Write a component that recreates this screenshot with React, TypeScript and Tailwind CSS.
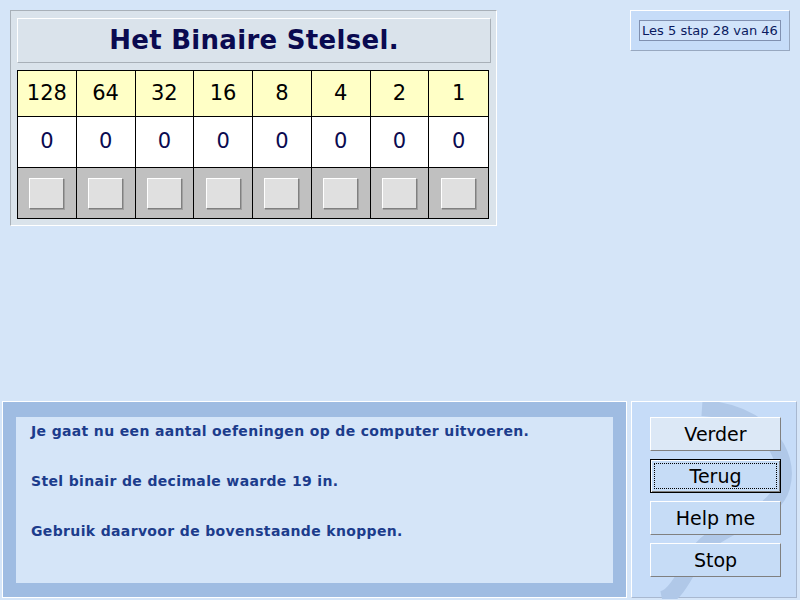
import React from "react";

const F = { fontFamily: '"DejaVu Sans", "Liberation Sans", sans-serif' };

const weights = [128, 64, 32, 16, 8, 4, 2, 1];

function SmallBtn() {
  return (
    <div className="w-[35px] h-[31px] bg-[#e0e0e0] border border-t-white border-l-white border-r-[#808080] border-b-[#808080] shadow-[1px_1px_0_#a0a0a0]" />
  );
}

function NavBtn({ label, focused, light }: { label: string; focused?: boolean; light?: boolean }) {
  return (
    <div
      className={`h-[34px] w-[131px] flex items-center justify-center text-[19px] text-black ${
        light ? "bg-[#dce8f6]" : "bg-[#c6dcf6]"
      } ${
        focused
          ? "border border-black shadow-[inset_1px_1px_0_#fff,inset_-1px_-1px_0_#808080]"
          : "border border-t-white border-l-white border-r-[#808080] border-b-[#808080]"
      }`}
      style={F}
    >
      {focused ? (
        <div className="w-[123px] h-[26px] border border-dotted border-black flex items-center justify-center">
          {label}
        </div>
      ) : (
        label
      )}
    </div>
  );
}

export default function App() {
  return (
    <div className="w-[800px] h-[600px] bg-[#d5e5f8] flex flex-col overflow-hidden" style={F}>
      <div className="h-[400px] flex justify-between items-start pt-[10px] pl-[10px] pr-[10px]">
        <div className="w-[487px] h-[216px] bg-[#dae3eb] border border-t-[#a8b0b8] border-l-[#a8b0b8] border-r-white border-b-white pt-[7px] pl-[6px]">
          <div className="w-[474px] h-[45px] border border-t-white border-l-white border-r-[#a8b0b8] border-b-[#a8b0b8] flex items-center justify-center text-[26px] tracking-[0.3px] font-bold text-[#0a0a50]">
            Het Binaire Stelsel.
          </div>
          <div className="mt-[7px] w-[472px] border border-black bg-white">
            <div className="grid grid-cols-8 h-[46px] bg-[#ffffc6] border-b border-black">
              {weights.map((w, i) => (
                <div
                  key={w}
                  className={`flex items-center justify-center text-[21px] text-black ${i < 7 ? "border-r border-black" : ""}`}
                >
                  {w}
                </div>
              ))}
            </div>
            <div className="grid grid-cols-8 h-[51px] bg-white border-b border-black">
              {weights.map((w, i) => (
                <div
                  key={w}
                  className={`flex items-center justify-center text-[21px] text-[#0a0a50] ${i < 7 ? "border-r border-black" : ""}`}
                >
                  0
                </div>
              ))}
            </div>
            <div className="grid grid-cols-8 h-[50px] bg-[#c0c0c0]">
              {weights.map((w, i) => (
                <div
                  key={w}
                  className={`flex items-center justify-center ${i < 7 ? "border-r border-black" : ""}`}
                >
                  <SmallBtn />
                </div>
              ))}
            </div>
          </div>
        </div>
        <div className="w-[160px] h-[41px] bg-[#c6dcf8] border border-t-white border-l-white border-r-[#98a8c0] border-b-[#98a8c0] flex items-center justify-center">
          <div className="w-[142px] h-[21px] bg-[#d2e4fa] border border-[#8090b0] flex items-center justify-center text-[13px] text-[#0a1a60] whitespace-nowrap">
            Les 5 stap 28 van 46
          </div>
        </div>
      </div>
      <div className="h-[200px] flex pt-[1px] pl-[2px] gap-[4px]">
        <div className="w-[625px] h-[197px] bg-[#9fbce2] border border-white pt-[15px] pl-[13px]">
          <div className="w-[597px] h-[166px] bg-[#d5e5f8] pl-[15px] pt-[2px] text-[14px] tracking-[0.35px] font-bold text-[#1c3c8c] leading-[25px]">
            <div>Je gaat nu een aantal oefeningen op de computer uitvoeren.</div>
            <div className="mt-[25px]">Stel binair de decimale waarde 19 in.</div>
            <div className="mt-[25px]">Gebruik daarvoor de bovenstaande knoppen.</div>
          </div>
        </div>
        <div className="relative w-[166px] h-[197px] bg-[#c6dcf8] border border-t-white border-l-white border-r-[#a8b8d0] border-b-[#a8b8d0]">
          <svg className="absolute inset-0" width="166" height="197" viewBox="0 0 166 197">
            <path
              d="M70 6 C 130 10, 160 50, 150 85 C 140 120, 80 120, 60 160 C 50 180, 40 195, 30 197"
              fill="none"
              stroke="#b0c8e8"
              strokeWidth="16"
            />
          </svg>
          <div className="relative flex flex-col gap-[8px] pl-[18px] pt-[15px]">
            <NavBtn label="Verder" light />
            <NavBtn label="Terug" focused />
            <NavBtn label="Help me" />
            <NavBtn label="Stop" />
          </div>
        </div>
      </div>
    </div>
  );
}
